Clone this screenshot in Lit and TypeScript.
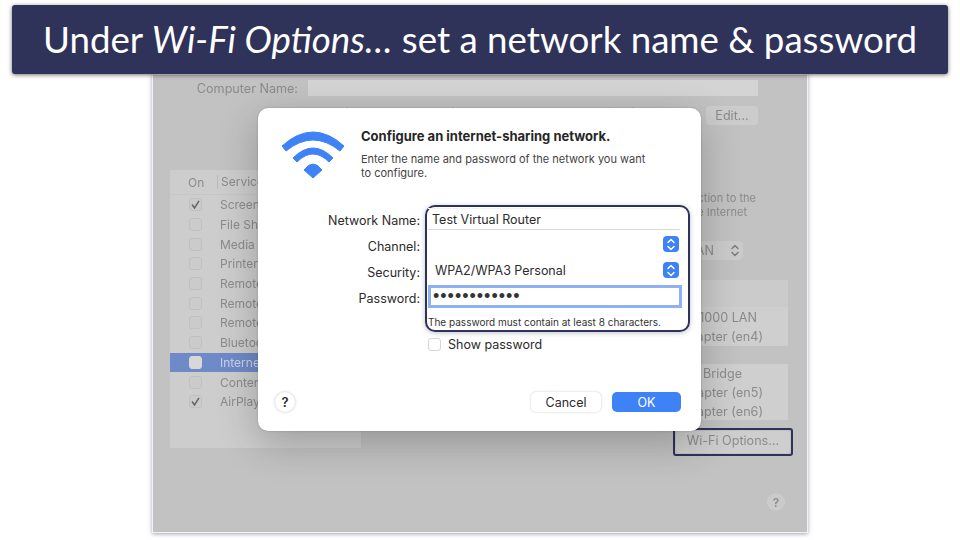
import { LitElement, html, css, svg } from 'lit';
import { customElement } from 'lit/decorators.js';

const services = [
  { name: 'Screen Sharing', checked: true },
  { name: 'File Sharing' },
  { name: 'Media Sharing' },
  { name: 'Printer Sharing' },
  { name: 'Remote Login' },
  { name: 'Remote Management' },
  { name: 'Remote Apple Events' },
  { name: 'Bluetooth Sharing' },
  { name: 'Internet Sharing', selected: true },
  { name: 'Content Caching' },
  { name: 'AirPlay', checked: true },
];

const stepper = (color: string) => svg`
  <svg width="10" height="13" viewBox="0 0 10 13" fill="none" stroke=${color} stroke-width="1.5" stroke-linecap="round" stroke-linejoin="round">
    <path d="M2 4.5 5 1.5 8 4.5M2 8.5 5 11.5 8 8.5"/>
  </svg>`;

@customElement('app-root')
export class AppRoot extends LitElement {
  static styles = css`
    :host {
      display: block;
      width: 960px;
      height: 540px;
      overflow: hidden;
      background: #fff;
      font-family: Inter, "Liberation Sans", sans-serif;
    }
    .banner {
      position: relative;
      z-index: 2;
      box-sizing: border-box;
      height: 69px;
      margin: 5px 12px 0;
      padding-bottom: 2px;
      display: flex;
      align-items: center;
      justify-content: center;
      background: #2f3259;
      border-radius: 3px;
      box-shadow: 0 1px 4px rgba(0, 0, 0, 0.55);
      color: #fff;
      font-family: Lato, sans-serif;
      font-size: 36.7px;
      white-space: pre;
    }
    .window {
      position: relative;
      box-sizing: border-box;
      width: 656px;
      height: 459px;
      padding: 0 15px 0 17px;
      margin-left: 152px;
      display: flex;
      flex-direction: column;
      background: #c2c2c2;
      border: 1px solid #f2f2f6;
      box-shadow: 0 1px 4px rgba(70, 70, 100, 0.5);
      color: #8b8b8b;
      font-size: 12.6px;
    }
    .backdrop {
      display: flex;
      flex-direction: column;
      filter: blur(0.35px);
    }
    .name-row {
      display: grid;
      grid-template-columns: 128px 450px;
      gap: 10px;
      height: 16px;
      margin-top: 5px;
      align-items: center;
    }
    .name-row label { text-align: right; }
    .name-field { height: 16px; background: #d4d4d4; }
    .edit-row {
      display: flex;
      justify-content: space-between;
      margin: 10px 34px 0 138px;
      height: 19px;
      font-size: 11px;
    }
    .edit-row span { margin-top: -1px; }
    .edit {
      width: 52px;
      display: flex;
      align-items: center;
      justify-content: center;
      background: #cccccc;
      border-radius: 4px;
      font-size: 12.6px;
    }
    .main {
      display: flex;
      justify-content: space-between;
      margin-top: 45px;
    }
    .services {
      width: 191px;
      height: 278px;
      background: #cdcdcd;
    }
    .services-head {
      display: flex;
      align-items: center;
      height: 25px;
      border-bottom: 1px solid #c6c6c6;
      box-sizing: border-box;
      font-size: 12px;
    }
    .services-head .on { width: 47px; padding-left: 18px; box-sizing: border-box; }
    .services-head .svc { border-left: 1px solid #bbb; padding-left: 3px; line-height: 14px; }
    .service {
      display: flex;
      align-items: center;
      height: 19.7px;
      padding-left: 19px;
      gap: 18px;
      white-space: nowrap;
      font-size: 12px;
    }
    .service.selected { background: #6f8ac8; color: #c9d2ea; }
    .box {
      box-sizing: border-box;
      width: 13px;
      height: 13px;
      display: flex;
      align-items: center;
      justify-content: center;
      border: 1px solid #c0c0c0;
      border-radius: 3px;
      background: #cbcbcb;
      flex: none;
    }
    .service.selected .box { background: #d8d8d8; border-color: #d8d8d8; }
    .side {
      width: 142px;
      display: flex;
      flex-direction: column;
      align-items: flex-end;
    }
    .blurb {
      margin: 21px 36px 0 0;
      font-size: 11px;
      line-height: 14px;
      text-align: right;
      white-space: nowrap;
    }
    .blurb span { display: block; }
    .blurb .short { padding-right: 9px; }
    .select {
      box-sizing: border-box;
      width: 90px;
      height: 19px;
      margin: 22px 49px 0 0;
      padding: 0 3px 0 0;
      display: flex;
      align-items: center;
      justify-content: flex-end;
      gap: 16px;
      background: #cbcbcb;
      border-radius: 5px;
      white-space: nowrap;
    }
    .select span, .select svg { flex: none; }
    .ports {
      width: 138px;
      margin: 20px 4px 0 0;
      display: flex;
      flex-direction: column;
    }
    .ports-head { height: 27px; background: #cbcbcb; }
    .band {
      display: flex;
      flex-direction: column;
      align-items: flex-end;
      justify-content: center;
      padding-right: 25px;
      background: #cfcfcf;
      white-space: nowrap;
      line-height: 19px;
    }
    .band + .band { margin-top: 18px; }
    .wifi {
      box-sizing: border-box;
      width: 120px;
      height: 28px;
      margin: 8px -1px 0 0;
      padding: 1px;
      border: 2px solid #2f3259;
      border-radius: 3px;
    }
    .wifi div {
      box-sizing: border-box;
      height: 100%;
      padding-bottom: 3px;
      display: flex;
      align-items: center;
      justify-content: center;
      background: #cecece;
      border-radius: 4px;
    }
    .help-back {
      width: 18px;
      height: 18px;
      margin: 37px 7px 0 0;
      display: flex;
      align-items: center;
      justify-content: center;
      background: #cbcbcb;
      border-radius: 50%;
      font-weight: 600;
      font-size: 12px;
    }
    .dialog {
      position: absolute;
      left: 105px;
      top: 33px;
      box-sizing: border-box;
      width: 443px;
      height: 323px;
      padding: 20px 0 19px 23px;
      display: flex;
      flex-direction: column;
      background: #fff;
      border-radius: 10px;
      box-shadow: 0 12px 40px rgba(0, 0, 0, 0.24), 0 0 2px rgba(0, 0, 0, 0.25);
      color: #2b2b2b;
      font-size: 12.5px;
    }
    .head { display: flex; gap: 16px; }
    .head svg { margin-top: 3px; flex: none; }
    .title { font-size: 13px; font-weight: 700; line-height: 16px; color: #262626; }
    .desc { margin-top: 8px; font-size: 11px; line-height: 14px; color: #444; width: 290px; }
    .form { display: flex; gap: 5px; margin: 25px 0 0 -23px; }
    .labels {
      width: 162px;
      padding-top: 3px;
      text-align: right;
    }
    .labels div { height: 26px; line-height: 26px; }
    .group {
      box-sizing: border-box;
      width: 265px;
      height: 127px;
      padding: 0 8px 0 1px;
      border: 2px solid #2f3259;
      border-radius: 10px;
      box-shadow: 0 1px 5px rgba(47, 50, 89, 0.3);
    }
    .row { height: 26px; display: flex; align-items: center; justify-content: space-between; padding-right: 1px; }
    .row.name {
      box-sizing: border-box;
      height: 22px;
      margin: 1px 0 1px;
      padding-left: 4px;
      border-top: 1px solid #f2f2f2;
      border-bottom: 1px solid #dcdcdc;
    }
    .row.pick { padding-left: 7px; }
    .step {
      width: 16px;
      height: 16px;
      display: flex;
      align-items: center;
      justify-content: center;
      background: #3d82f6;
      border-radius: 4px;
    }
    .password {
      box-sizing: border-box;
      height: 23px;
      margin: 2px -2px 0 0;
      padding-left: 2px;
      display: flex;
      align-items: center;
      border: 3px solid #8fb1f3;
      font-family: "Liberation Sans", sans-serif;
      font-size: 18px;
      letter-spacing: 1px;
      color: #333;
    }
    .note { margin-top: 7px; font-size: 10px; line-height: 14px; white-space: nowrap; color: #333; }
    .show {
      display: flex;
      align-items: center;
      gap: 7px;
      margin: 5px 0 0 147px;
    }
    .show .box { background: #fff; border-color: #d5d5d5; }
    .foot {
      margin-top: auto;
      margin-left: -6px;
      padding-right: 20px;
      display: flex;
      align-items: center;
      gap: 11px;
    }
    .help {
      width: 20px;
      height: 20px;
      margin-right: auto;
      display: flex;
      align-items: center;
      justify-content: center;
      border-radius: 50%;
      box-shadow: 0 0 3px rgba(0, 0, 0, 0.25);
      font-weight: 600;
      font-size: 13px;
    }
    .btn {
      height: 20px;
      width: 70px;
      display: flex;
      align-items: center;
      justify-content: center;
      border-radius: 5px;
      box-shadow: 0 0 2px rgba(0, 0, 0, 0.25);
    }
    .btn.ok { background: #3d82f6; color: #fff; box-shadow: none; width: 69px; }
  `;

  render() {
    return html`
      <div class="banner">Under <i>Wi-Fi Options…</i> set a network name &amp; password</div>
      <div class="window">
        <div class="backdrop">
          <div class="name-row">
            <label>Computer Name:</label>
            <div class="name-field"></div>
          </div>
          <div class="edit-row">
            <span>Computers on your local network can access your computer at:</span>
            <div class="edit">Edit…</div>
          </div>
          <div class="main">
            <div class="services">
              <div class="services-head">
                <div class="on">On</div>
                <div class="svc">Service</div>
              </div>
              ${services.map(
                (s) => html`
                  <div class="service ${s.selected ? 'selected' : ''}">
                    <div class="box">
                      ${s.checked
                        ? svg`<svg width="9" height="9" viewBox="0 0 9 9" fill="none" stroke="#666" stroke-width="1.5"><path d="M1 4.5 3.5 8 8 .8"/></svg>`
                        : ''}
                    </div>
                    <span>${s.name}</span>
                  </div>
                `,
              )}
            </div>
            <div class="side">
              <div class="blurb">
                <span>connection to the</span>
                <span class="short">the Internet</span>
              </div>
              <div class="select"><span>Ethernet LAN</span>${stepper('#7d7d7d')}</div>
              <div class="ports">
                <div class="ports-head"></div>
                <div class="band" style="height:39px">
                  <span style="padding-right:6px">10/100/1000 LAN</span>
                  <span>Adapter (en4)</span>
                </div>
                <div class="band" style="height:56px">
                  <span style="padding-right:21px">Thunderbolt Bridge</span>
                  <span>Adapter (en5)</span>
                  <span>Adapter (en6)</span>
                </div>
              </div>
              <div class="wifi"><div>Wi-Fi Options…</div></div>
              <div class="help-back">?</div>
            </div>
          </div>
        </div>

        <div class="dialog">
          <div class="head">
            <svg width="64" height="48" viewBox="0 0 64 48" fill="#3d82f6" stroke="#3d82f6" stroke-width="1" stroke-linejoin="round">
              <path d="M1 15Q32 -13 63 15L59 20Q32 -2 5 20Z" />
              <path d="M12 27Q32 7 52 27L48 31Q32 15 16 31Z" />
              <path d="M23 39Q32 27 41 39L32 47Z" />
            </svg>
            <div>
              <div class="title">Configure an internet-sharing network.</div>
              <div class="desc">Enter the name and password of the network you want to configure.</div>
            </div>
          </div>
          <div class="form">
            <div class="labels">
              <div>Network Name:</div>
              <div>Channel:</div>
              <div>Security:</div>
              <div>Password:</div>
            </div>
            <div class="group">
              <div class="row name">Test Virtual Router</div>
              <div class="row pick"><span></span><div class="step">${stepper('#fff')}</div></div>
              <div class="row pick"><span>WPA2/WPA3 Personal</span><div class="step">${stepper('#fff')}</div></div>
              <div class="password">••••••••••••</div>
              <div class="note">The password must contain at least 8 characters.</div>
            </div>
          </div>
          <div class="show"><div class="box"></div><span>Show password</span></div>
          <div class="foot">
            <div class="help">?</div>
            <div class="btn">Cancel</div>
            <div class="btn ok">OK</div>
          </div>
        </div>
      </div>
    `;
  }
}
